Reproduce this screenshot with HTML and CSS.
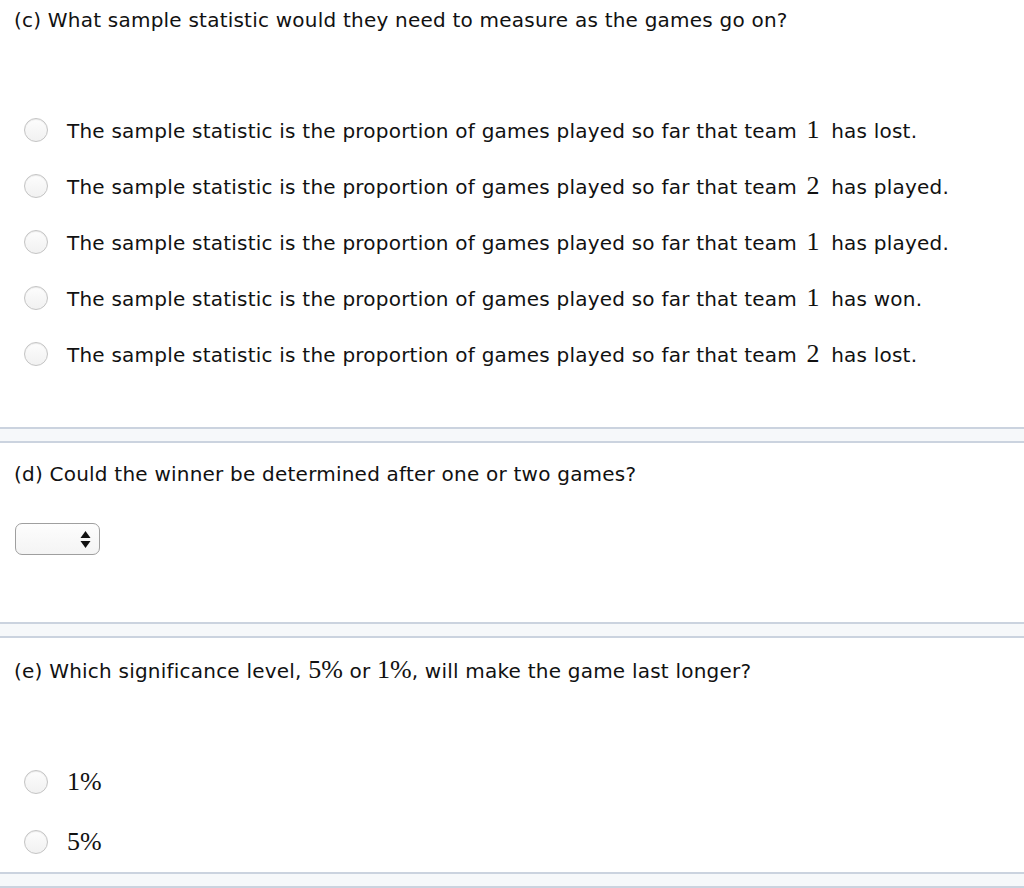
FILE: index.html
```html
<!DOCTYPE html>
<html lang="en">
<head>
    <meta charset="UTF-8">
    <title>Questions</title>
    <link rel="stylesheet" href="styles.css">
</head>
<body>
    <div class="part part-c">
        <div class="question">(c) What sample statistic would they need to measure as the games go on?</div>
        <div class="options">
            <label class="option"><span class="radio"></span><span>The sample statistic is the proportion of games played so far that team <span class="math">1</span> has lost.</span></label>
            <label class="option"><span class="radio"></span><span>The sample statistic is the proportion of games played so far that team <span class="math">2</span> has played.</span></label>
            <label class="option"><span class="radio"></span><span>The sample statistic is the proportion of games played so far that team <span class="math">1</span> has played.</span></label>
            <label class="option"><span class="radio"></span><span>The sample statistic is the proportion of games played so far that team <span class="math">1</span> has won.</span></label>
            <label class="option"><span class="radio"></span><span>The sample statistic is the proportion of games played so far that team <span class="math">2</span> has lost.</span></label>
        </div>
    </div>

    <div class="divider"></div>

    <div class="part part-d">
        <div class="question">(d) Could the winner be determined after one or two games?</div>
        <div class="select">
            <svg width="11" height="19" viewBox="0 0 11 19">
                <polygon points="5.5,1 10.5,8 0.5,8" fill="#111"/>
                <polygon points="0.5,11 10.5,11 5.5,18" fill="#111"/>
            </svg>
        </div>
    </div>

    <div class="divider"></div>

    <div class="part part-e">
        <div class="question">(e) Which significance level, <span class="math math-inline">5%</span> or <span class="math math-inline">1%</span>, will make the game last longer?</div>
        <div class="options options-e">
            <label class="option"><span class="radio"></span><span class="math">1%</span></label>
            <label class="option"><span class="radio"></span><span class="math">5%</span></label>
        </div>
    </div>

    <div class="divider"></div>
</body>
</html>
```

FILE: styles.css
```css
* {
    margin: 0;
    padding: 0;
    box-sizing: border-box;
}

body {
    font-family: "DejaVu Sans", Verdana, sans-serif;
    font-size: 20px;
    letter-spacing: 0.22px;
    color: #111;
    background: white;
    width: 1024px;
    overflow: hidden;
}

.question {
    line-height: 24px;
    padding-left: 14px;
}

.math {
    font-family: "Liberation Serif", "Times New Roman", serif;
    font-size: 26px;
    letter-spacing: 0;
    padding: 0 5px 0 3px;
}

.math-inline {
    padding: 0;
}

/* вопрос (c) */
.part-c {
    padding-top: 8px;
    height: 427px;
}

.options {
    display: flex;
    flex-direction: column;
    margin-top: 70px;
}

.option {
    display: flex;
    align-items: center;
    height: 56px;
    padding-left: 24px;
}

.radio {
    width: 24px;
    height: 24px;
    border-radius: 50%;
    border: 1px solid #c4c4c4;
    background: linear-gradient(#fdfdfd, #f1f1f1);
    box-shadow: inset 0 1px 1px rgba(0, 0, 0, 0.08);
    margin-right: 19px;
    flex-shrink: 0;
}

/* полоса-разделитель */
.divider {
    height: 16px;
    border-top: 2px solid #cbd3df;
    border-bottom: 2px solid #cbd3df;
    background: #f6f8fa;
}

/* вопрос (d) */
.part-d {
    padding-top: 19px;
    height: 179px;
}

.select {
    margin: 37px 0 0 15px;
    width: 85px;
    height: 32px;
    border: 1px solid #9f9f9f;
    border-radius: 7px;
    background: linear-gradient(#fdfdfd, #f4f4f4);
    display: flex;
    align-items: center;
    justify-content: flex-end;
    padding-right: 8px;
}

/* вопрос (e) */
.part-e {
    padding-top: 20px;
    height: 234px;
}

.options-e {
    margin-top: 69px;
}

.options-e .option {
    height: 60px;
}

.options-e .math {
    padding: 0;
}
```
